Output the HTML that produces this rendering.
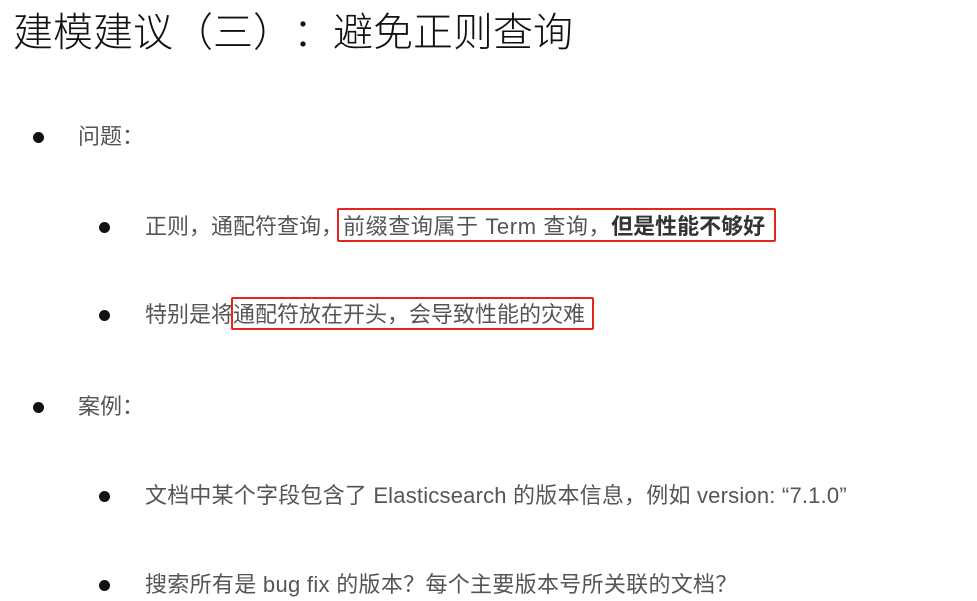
<!DOCTYPE html>
<html><head><meta charset="utf-8"><style>
body{margin:0;width:977px;height:601px;background:#fff;overflow:hidden;position:relative;font-family:"Liberation Sans","Noto Sans CJK SC",sans-serif;text-spacing-trim:space-all;}
.t{position:absolute;left:13px;top:5px;font-size:40px;color:#111;white-space:nowrap;line-height:56px;font-weight:300}
.r{position:absolute;white-space:nowrap;font-size:22px;color:#555;line-height:30px}
.d{position:absolute;width:11px;height:11px;border-radius:50%;background:#111}
.box{position:absolute;border:2.5px solid #e52420;border-radius:2px}
b{color:#333}
</style></head><body>
<div class="t">建模建议（三）：避免正则查询</div>
<div class="d" style="left:33px;top:132px"></div><div class="r" style="left:78px;top:122px">问题：</div>
<div class="d" style="left:99px;top:222px"></div><div class="r" style="left:145px;top:212px">正则，通配符查询，<span style="letter-spacing:0.6px">前缀查询属于 Term 查询，</span><b>但是性能不够好</b></div>
<div class="box" style="left:337px;top:208px;width:435px;height:30px"></div>
<div class="d" style="left:99px;top:310px"></div><div class="r" style="left:145px;top:300px">特别是将通配符放在开头，会导致性能的灾难</div>
<div class="box" style="left:231px;top:297px;width:359px;height:29px"></div>
<div class="d" style="left:33px;top:402px"></div><div class="r" style="left:78px;top:392px">案例：</div>
<div class="d" style="left:99px;top:491px"></div><div class="r" style="left:145px;top:481px;letter-spacing:0.2px">文档中某个字段包含了 Elasticsearch 的版本信息，例如 version: “7.1.0”</div>
<div class="d" style="left:99px;top:580px"></div><div class="r" style="left:145px;top:570px;letter-spacing:0.3px">搜索所有是 bug fix 的版本？每个主要版本号所关联的文档？</div>
</body></html>
